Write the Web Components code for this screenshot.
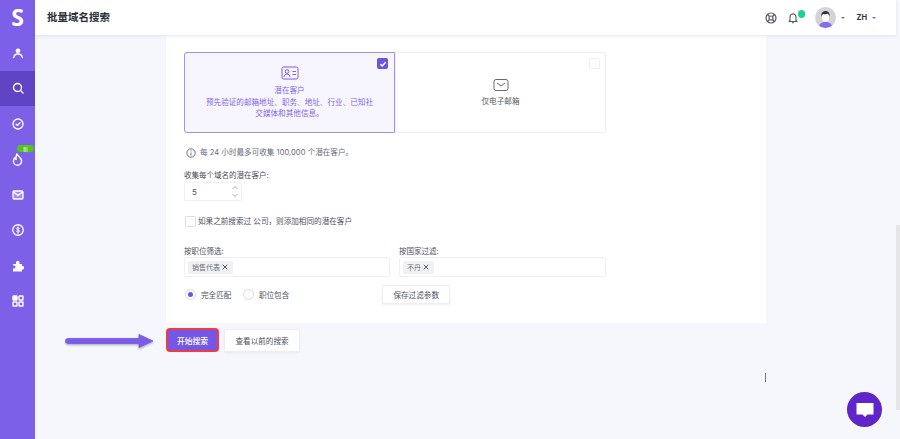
<!DOCTYPE html>
<html lang="zh"><head><meta charset="utf-8"><title>批量域名搜索</title>
<style>
html,body{margin:0;padding:0;height:439px;overflow:hidden;background:#f6f7fd;font-family:Inter,"Noto Sans CJK SC",sans-serif;color:#4b4f5c}
</style></head><body>
<app-shell>
  <app-sidebar slot="side"></app-sidebar>
  <top-bar slot="top" title="批量域名搜索"></top-bar>
  <search-form></search-form>
</app-shell>
<script>
function def(name,css,html){
  customElements.define(name,class extends HTMLElement{
    constructor(){super();const r=this.attachShadow({mode:'open'});
      r.innerHTML='<style>'+css+'</style>'+(typeof html==='function'?html(this):html);}
    connectedCallback(){
      if(typeof html==='function'){this.shadowRoot.innerHTML='<style>'+css+'</style>'+html(this);}
    }
  });
}
const ic=(p,s=12)=>`<svg width="${s}" height="${s}" viewBox="0 0 24 24" fill="none" stroke="currentColor" stroke-width="2.600" stroke-linecap="round" stroke-linejoin="round">${p}</svg>`;

def('app-shell',`
:host{display:grid;grid-template-columns:35px 1fr 4px;grid-template-rows:35px 1fr;width:900px;height:439px;overflow:hidden}
.side{grid-row:1/3;grid-column:1}
.top{grid-column:2;grid-row:1}
.main{grid-column:2;grid-row:2;overflow:hidden;position:relative}
.track{grid-column:3;grid-row:1/3;background:#f6f7fd;display:flex;flex-direction:column;padding-top:225px}
.thumb{height:185px;background:#e6e6e8}
`,`<div class="side"><slot name="side"></slot></div>
<div class="top"><slot name="top"></slot></div>
<div class="main"><slot></slot></div>
<div class="track"><div class="thumb"></div></div>`);

def('side-item',`
:host{display:flex;height:35.5px;align-items:center;justify-content:center;color:#fff;position:relative}
:host([active]){background:#5f45c6}
.b{position:absolute;left:17px;top:3.500px;width:17px;height:7px;border-radius:4px;background:#52c41a;color:#f2ffe6;font:5px/7px "Noto Sans CJK SC",sans-serif;text-align:center}
`,el=>`<slot></slot>${el.hasAttribute('badge')?`<span class="b">${el.getAttribute('badge')}</span>`:''}`);

def('app-sidebar',`
:host{display:flex;flex-direction:column;height:439px;background:#7d60e8;color:#fff}
.logo{height:35px;display:flex;align-items:center;justify-content:center;font:700 23px/35px "Open Sans",Inter,sans-serif;color:#fff}
`,`<div class="logo">S</div><slot></slot>
<side-item>${ic('<circle cx="12" cy="7.500" r="3.400" fill="currentColor"/><path d="M3.500 21c.6-4.500 4-7 8.500-7s7.900 2.500 8.500 7"/>')}</side-item>
<side-item active>${ic('<circle cx="11" cy="11" r="8"/><path d="M17 17l5 5"/>')}</side-item>
<side-item>${ic('<circle cx="12" cy="12" r="10"/><path d="M8 12.300l2.800 2.700L16 9.500"/>')}</side-item>
<side-item badge="新"><span style="display:flex;padding-top:1px">${ic('<path d="M11 1.500c1 4.500 8.500 7 8.500 13.500a7.500 7.500 0 0 1-15 0c0-3 1.500-5 3-6.500.3 1.800 1 2.800 2 3.300C9 8.500 9.500 5 11 1.500z"/>',13)}</span></side-item>
<side-item>${ic('<rect x="2" y="4" width="20" height="16" rx="2" fill="rgba(255,255,255,.3)"/><path d="M3 6l9 7 9-7"/>')}</side-item>
<side-item>${ic('<circle cx="12" cy="12" r="10.500"/><path d="M15 9c-.5-1.200-1.500-1.600-3-1.600-1.700 0-3 .8-3 2.200 0 3 6 1.600 6 4.600 0 1.400-1.300 2.300-3 2.300-1.600 0-2.700-.6-3.200-1.800M12 5.500v13" stroke-width="2"/>')}</side-item>
<side-item><svg width="12" height="12" viewBox="0 0 24 24" fill="currentColor"><path d="M2 8h6V5a3.500 3.500 0 0 1 7 0v3h5v4h1a3.500 3.500 0 0 1 0 7h-1v4H2v-6h2a3 3 0 0 0 0-6H2z"/></svg></side-item>
<side-item><svg width="12" height="12" viewBox="0 0 24 24" fill="none" stroke="currentColor" stroke-width="2.800"><rect x="2" y="2" width="8" height="8" rx="1" fill="currentColor"/><rect x="14" y="2" width="8" height="8" rx="1"/><rect x="2" y="14" width="8" height="8" rx="1"/><rect x="14" y="14" width="8" height="8" rx="1"/></svg></side-item>`);

def('top-bar',`
:host{display:flex;align-items:center;height:35px;box-sizing:border-box;background:#fff;box-shadow:0 1px 3px rgba(60,60,90,.12);position:relative;z-index:2;padding:0 20px 0 12px;color:#2c303a}
h1{font:700 10.500px/35px Inter,"Noto Sans CJK SC",sans-serif;margin:0;flex:1;color:#2b2f3a}
.r{display:flex;align-items:center;color:#555a66}
.caret{width:0;height:0;border:2px solid transparent;border-top:2.500px solid #777;border-bottom:0;margin-left:5px}
.bell{position:relative;margin-left:10px;display:flex}
.dot{position:absolute;left:10.500px;top:-1.500px;width:7.500px;height:7.500px;border-radius:50%;background:#1fd09a}
.av{margin-left:16px;width:21px;height:21px;border-radius:50%;overflow:hidden;display:flex}
.lang{font:700 7.500px/1 Inter,sans-serif;margin-left:11px;color:#33363f}
`,el=>`<h1>${el.getAttribute('title')||''}</h1><div class="r">
<svg width="12" height="12" viewBox="0 0 24 24" fill="none" stroke="currentColor" stroke-width="2.400"><circle cx="12" cy="12" r="10"/><circle cx="12" cy="12" r="4"/><path d="M5 5l4 4M19 5l-4 4M5 19l4-4M19 19l-4-4"/></svg>
<span class="bell"><svg width="12" height="12" viewBox="0 0 24 24" fill="none" stroke="currentColor" stroke-width="2.200" stroke-linejoin="round"><path d="M6 17V10a6 6 0 0 1 12 0v7l2 2H4zM10 21.500h4M12 2v2"/></svg><span class="dot"></span></span>
<span class="av"><svg width="21" height="21" viewBox="0 0 21 21"><rect width="21" height="21" fill="#d4d4d8"/><path d="M3.500 21c.5-4.500 3.500-6 7-6s6.500 1.500 7 6z" fill="#8a6cf0"/><ellipse cx="10.500" cy="10" rx="3.800" ry="4.800" fill="#fff"/><path d="M6.500 10c-.8-4 1.500-6 4-6s4.800 2 4 6c-.3-2-1-3-1.800-3.300-1.400.6-3.500.6-4.500.2-.9.500-1.400 1.300-1.700 3.100z" fill="#33333c"/></svg></span>
<span class="caret"></span><span class="lang">ZH</span><span class="caret"></span></div>`);

def('option-card',`
:host{display:flex;flex-direction:column;align-items:center;justify-content:center;box-sizing:border-box;height:81px;width:211px;border:1px solid #f0f0f4;border-radius:0 3px 3px 0;background:#fff;color:#555a66;position:relative;font-size:7.600px;line-height:11.500px;text-align:center;padding:0 20px}
:host([checked]){border:1px solid #a58ff2;border-radius:3px 0 0 3px;background:#f7f5fe;color:#8468ee}
.box{position:absolute;box-sizing:border-box;right:5px;top:5px;width:11px;height:11px;border-radius:1.500px;border:1px solid #efeff3;background:#fff;display:flex;align-items:center;justify-content:center}
:host([checked]) .box{right:6px;background:#6e52e0;border-color:#6e52e0}
svg.check{display:none}:host([checked]) svg.check{display:block}
.i{display:flex;margin-bottom:4px}
`,`<span class="box"><svg class="check" width="8" height="8" viewBox="0 0 12 12" fill="none" stroke="#fff" stroke-width="2.200"><path d="M2 6.500l2.700 2.500L10 3.500"/></svg></span><div class="i"><slot name="icon"></slot></div><slot></slot>`);

def('tag-input',`
:host{display:block}
label{display:block;font-size:7.500px;line-height:11px;color:#4b4f5c}
.f{box-sizing:border-box;height:20px;border:1px solid #f0f0f4;border-radius:2px;background:#fff;display:flex;align-items:center;padding:0 3px}
.t{display:inline-flex;align-items:center;height:13px;padding:0 5px 0 4px;background:#f0f1f5;border-radius:2px;font-size:7px;color:#6b6f7c;gap:2px}
.t svg{display:block}
`,el=>`<label>${el.getAttribute('label')}</label><div class="f"><span class="t">${el.getAttribute('tag')}<svg width="6" height="6" viewBox="0 0 8 8" stroke="#555" stroke-width="1.300"><path d="M1 1l6 6M7 1L1 7"/></svg></span></div>`);

def('radio-opt',`
:host{display:inline-flex;align-items:center;gap:5px;font-size:7.600px;color:#4f5360}
.c{box-sizing:border-box;width:11px;height:11px;border-radius:50%;border:1px solid #d9d9e0;background:#fff;display:flex;align-items:center;justify-content:center}
:host([on]) .c::after{content:"";width:5px;height:5px;border-radius:50%;background:#6e52e0}
`,`<span class="c"></span><slot></slot>`);

def('plain-btn',`
:host{display:inline-flex;align-items:center;justify-content:center;box-sizing:border-box;background:#fff;border:1px solid #eeeef2;border-radius:2px;box-shadow:0 1px 2px rgba(60,60,90,.08);color:#4f5360;font-size:7.600px;height:19px;padding:0 10px;white-space:nowrap}
:host([big]){height:23px;padding:0 10.500px}
`,`<slot></slot>`);

def('search-form',`
:host{display:block;padding-left:131px;height:404px;position:relative}
.card{box-sizing:border-box;width:600px;height:288px;background:#fff;padding:17px 18px 0}
.opts{display:flex;width:422px}
.info{display:flex;align-items:center;gap:4px;margin-top:14px;padding-left:2px;font-size:7.600px;line-height:12px;color:#6a6e7b}
.lbl{font-size:7.500px;line-height:11px;margin-top:11px;color:#4b4f5c}
.num{box-sizing:border-box;width:58px;height:19px;margin-top:1px;border:1px solid #f0f0f4;border-radius:2px;display:flex;align-items:center;justify-content:space-between;padding:0 3px 0 7px;font-size:8px;color:#4b4f5c}
.arrows{display:flex;flex-direction:column;gap:5px}
.chk{display:flex;align-items:center;gap:2px;margin-top:15px;font-size:7.600px;line-height:11px;color:#4f5360}
.chk i{box-sizing:border-box;display:block;width:11px;height:11px;margin:0 0 0 1px;border:1px solid #dcdce2;border-radius:1.500px;background:#fff}
.filters{display:grid;grid-template-columns:206px 207px;gap:9px;margin-top:19px}
.radios{display:flex;align-items:center;width:266px;margin-top:8px;padding-left:1px;box-sizing:border-box}
.radios radio-opt+radio-opt{margin-left:11.500px}
.radios plain-btn{margin-left:auto}
.act{display:flex;gap:5px;margin-top:5px;align-items:center}
.go{box-sizing:border-box;width:53px;height:24px;border:2px solid #ef3b42;border-radius:4px;background:#7457e6;color:#fff;font-size:7.800px;font-weight:500;display:flex;align-items:center;justify-content:center}
.arrow{position:absolute;left:30px;top:296px}
.cursor{position:absolute;left:730px;top:338px;width:1px;height:9px;background:#777}
.chat{position:absolute;left:812px;top:357px;width:35px;height:35px;border-radius:50%;background:#5f25c8;display:flex;align-items:center;justify-content:center}
`,`<div class="card">
<div class="opts">
<option-card checked><svg slot="icon" width="18" height="16" viewBox="0 0 18 16" fill="none" stroke="#7b5fe8" stroke-width="1"><rect x="1" y="2" width="16" height="12" rx="1.500"/><circle cx="6" cy="6.500" r="1.800"/><path d="M3 12c.3-2 1.500-3 3-3s2.700 1 3 3M11.500 6.500H15M11.500 9.500H15"/></svg>潜在客户<br>预先验证的邮箱地址、职务、地址、行业、已知社交媒体和其他信息。</option-card>
<option-card><svg slot="icon" width="16" height="14" viewBox="0 0 16 14" fill="none" stroke="#666a76" stroke-width="1"><rect x="1" y="1.500" width="14" height="11" rx="2"/><path d="M4 5l4 3 4-3"/></svg>仅电子邮箱</option-card>
</div>
<div class="info"><svg width="10" height="10" viewBox="0 0 12 12" fill="none" stroke="#555" stroke-width="1"><circle cx="6" cy="6" r="5"/><path d="M6 5.500V9M6 3v1.200"/></svg><span>每 24 小时最多可收集 100,000 个潜在客户。</span></div>
<div class="lbl">收集每个域名的潜在客户:</div>
<div class="num"><span>5</span><span class="arrows"><svg width="6" height="3" viewBox="0 0 6 3" fill="none" stroke="#888" stroke-width=".7"><path d="M.5 3L3 .5 5.500 3"/></svg><svg width="6" height="3" viewBox="0 0 6 3" fill="none" stroke="#888" stroke-width=".7"><path d="M.5 0L3 2.500 5.500 0"/></svg></span></div>
<div class="chk"><i></i>如果之前搜索过 公司，则添加相同的潜在客户</div>
<div class="filters"><tag-input label="按职位筛选:" tag="销售代表"></tag-input><tag-input label="按国家过滤:" tag="不丹"></tag-input></div>
<div class="radios"><radio-opt on>完全匹配</radio-opt><radio-opt>职位包含</radio-opt><plain-btn>保存过滤参数</plain-btn></div>
</div>
<div class="act"><div class="go">开始搜索</div><plain-btn big>查看以前的搜索</plain-btn></div>
<svg class="arrow" width="92" height="20" viewBox="0 0 92 20"><defs><filter id="s" x="-10%" y="-50%" width="120%" height="200%"><feDropShadow dx="0" dy="1" stdDeviation="1" flood-color="#333" flood-opacity=".45"/></filter></defs><path filter="url(#s)" d="M3 7.500h71V3.500l14 6.500-14 6.500v-4H3a2.500 2.500 0 0 1 0-5z" fill="#7a5ce6" stroke="#7a5ce6" stroke-width=".8" stroke-linejoin="round"/></svg>
<span class="cursor"></span>
<div class="chat"><svg width="18" height="16" viewBox="0 0 18 16" fill="#fff"><path d="M.5 1h17v11.500h-6L9 15l-2.500-2.500H.5z"/></svg></div>`);
</script>
</body></html>
